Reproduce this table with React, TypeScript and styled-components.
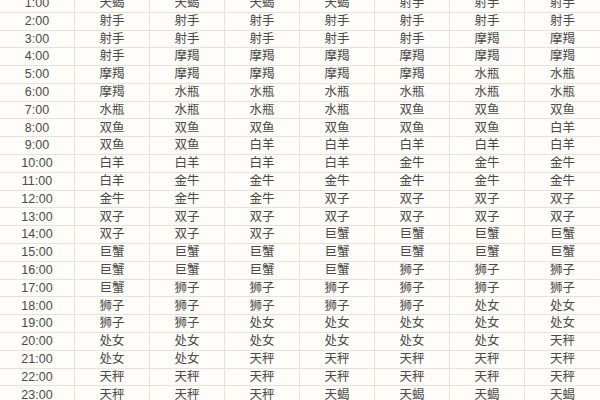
import styled, { createGlobalStyle } from 'styled-components';

const GlobalStyle = createGlobalStyle`
  html, body {
    margin: 0;
    padding: 0;
    background: #fffdfa;
  }
`;

const Viewport = styled.div`
  width: 600px;
  height: 400px;
  overflow: hidden;
  background: #fffdfa;
`;

const Table = styled.div`
  margin-top: -5.1px;
  display: flex;
  flex-direction: column;
  font-family: 'Liberation Sans', 'Noto Sans CJK SC', sans-serif;
  font-size: 12.5px;
  color: #4a4a4a;
`;

const Row = styled.div`
  display: grid;
  grid-template-columns: repeat(8, 75px);
  height: 17.8px;
  box-sizing: border-box;
  border-bottom: 1px solid #eee0d6;
`;

const Cell = styled.div<{ $last?: boolean }>`
  display: flex;
  align-items: center;
  justify-content: center;
  border-right: ${(p) => (p.$last ? 'none' : '1px solid #eee0d6')};
  line-height: 1;
  white-space: nowrap;
`;

const data: string[][] = [
  ['天蝎', '天蝎', '天蝎', '天蝎', '射手', '射手', '射手'],
  ['射手', '射手', '射手', '射手', '射手', '射手', '射手'],
  ['射手', '射手', '射手', '射手', '射手', '摩羯', '摩羯'],
  ['射手', '摩羯', '摩羯', '摩羯', '摩羯', '摩羯', '摩羯'],
  ['摩羯', '摩羯', '摩羯', '摩羯', '摩羯', '水瓶', '水瓶'],
  ['摩羯', '水瓶', '水瓶', '水瓶', '水瓶', '水瓶', '水瓶'],
  ['水瓶', '水瓶', '水瓶', '水瓶', '双鱼', '双鱼', '双鱼'],
  ['双鱼', '双鱼', '双鱼', '双鱼', '双鱼', '双鱼', '白羊'],
  ['双鱼', '双鱼', '白羊', '白羊', '白羊', '白羊', '白羊'],
  ['白羊', '白羊', '白羊', '白羊', '金牛', '金牛', '金牛'],
  ['白羊', '金牛', '金牛', '金牛', '金牛', '金牛', '金牛'],
  ['金牛', '金牛', '金牛', '双子', '双子', '双子', '双子'],
  ['双子', '双子', '双子', '双子', '双子', '双子', '双子'],
  ['双子', '双子', '双子', '巨蟹', '巨蟹', '巨蟹', '巨蟹'],
  ['巨蟹', '巨蟹', '巨蟹', '巨蟹', '巨蟹', '巨蟹', '巨蟹'],
  ['巨蟹', '巨蟹', '巨蟹', '巨蟹', '狮子', '狮子', '狮子'],
  ['巨蟹', '狮子', '狮子', '狮子', '狮子', '狮子', '狮子'],
  ['狮子', '狮子', '狮子', '狮子', '狮子', '处女', '处女'],
  ['狮子', '狮子', '处女', '处女', '处女', '处女', '处女'],
  ['处女', '处女', '处女', '处女', '处女', '处女', '天秤'],
  ['处女', '处女', '天秤', '天秤', '天秤', '天秤', '天秤'],
  ['天秤', '天秤', '天秤', '天秤', '天秤', '天秤', '天秤'],
  ['天秤', '天秤', '天秤', '天蝎', '天蝎', '天蝎', '天蝎'],
];

export default function App() {
  return (
    <>
      <GlobalStyle />
      <Viewport>
        <Table>
          {data.map((signs, i) => (
            <Row key={i}>
              <Cell>{`${i + 1}:00`}</Cell>
              {signs.map((s, j) => (
                <Cell key={j} $last={j === signs.length - 1}>
                  {s}
                </Cell>
              ))}
            </Row>
          ))}
        </Table>
      </Viewport>
    </>
  );
}
